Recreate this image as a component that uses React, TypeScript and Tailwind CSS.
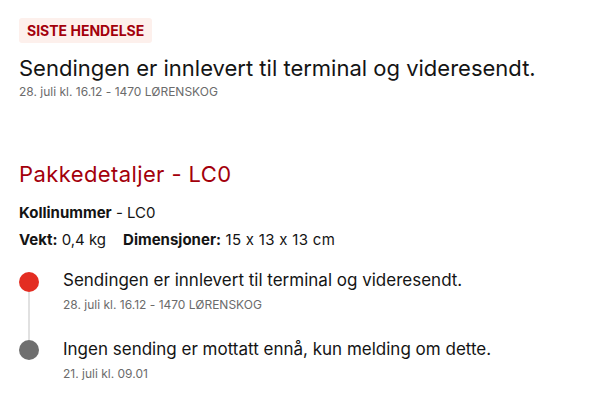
export default function App() {
  return (
    <div className="w-[592px] h-[400px] bg-white px-[19px] pt-[18px] [font-feature-settings:'calt'_0]" style={{ fontFamily: "Inter, 'Liberation Sans', sans-serif" }}>
      <div className="inline-flex h-[25px] items-center rounded-[3px] bg-[#fdf0ec] px-[8px] text-[14px] font-bold text-[#a3000b]">SISTE HENDELSE</div>
      <div className="mt-[11px] text-[22px] leading-[28px] text-[#141414]">Sendingen er innlevert til terminal og videresendt.</div>
      <div className="mt-[2px] text-[12px] leading-[16px] text-[#6b6b6b]">28. juli kl. 16.12 - 1470 LØRENSKOG</div>
      <div className="mt-[60px] text-[22px] leading-[28px] tracking-[0.4px] text-[#a3000b]">Pakkedetaljer - LC0</div>
      <div className="mt-[15px] text-[15px] leading-[20px] text-[#141414]"><span className="font-bold">Kollinummer</span> - LC0</div>
      <div className="mt-[7px] flex gap-[17px] text-[15px] leading-[20px] text-[#141414]">
        <span><span className="font-bold">Vekt:</span> 0,4 kg</span>
        <span className="tracking-[0.3px]"><span className="font-bold tracking-normal">Dimensjoner:</span> 15 x 13 x 13 cm</span>
      </div>
      <div className="mt-[19px] flex flex-col">
        <div className="flex">
          <div className="flex w-[20px] shrink-0 flex-col items-center">
            <div className="mt-[3px] h-[20px] w-[20px] rounded-full bg-[#e32d22]" />
            <div className="w-[2px] flex-1 bg-[#e1e1e1]" />
          </div>
          <div className="ml-[24px] pb-[25px]">
            <div className="text-[17px] leading-[22px] text-[#141414]">Sendingen er innlevert til terminal og videresendt.</div>
            <div className="mt-[6px] text-[12px] leading-[16px] text-[#6b6b6b]">28. juli kl. 16.12 - 1470 LØRENSKOG</div>
          </div>
        </div>
        <div className="flex">
          <div className="flex w-[20px] shrink-0 flex-col items-center">
            <div className="h-[2px] w-[2px] bg-[#e1e1e1]" />
            <div className="h-[20px] w-[20px] rounded-full bg-[#6f6f6f]" />
          </div>
          <div className="ml-[24px]">
            <div className="text-[17px] leading-[22px] text-[#141414]">Ingen sending er mottatt ennå, kun melding om dette.</div>
            <div className="mt-[6px] text-[12px] leading-[16px] text-[#6b6b6b]">21. juli kl. 09.01</div>
          </div>
        </div>
      </div>
    </div>
  );
}
